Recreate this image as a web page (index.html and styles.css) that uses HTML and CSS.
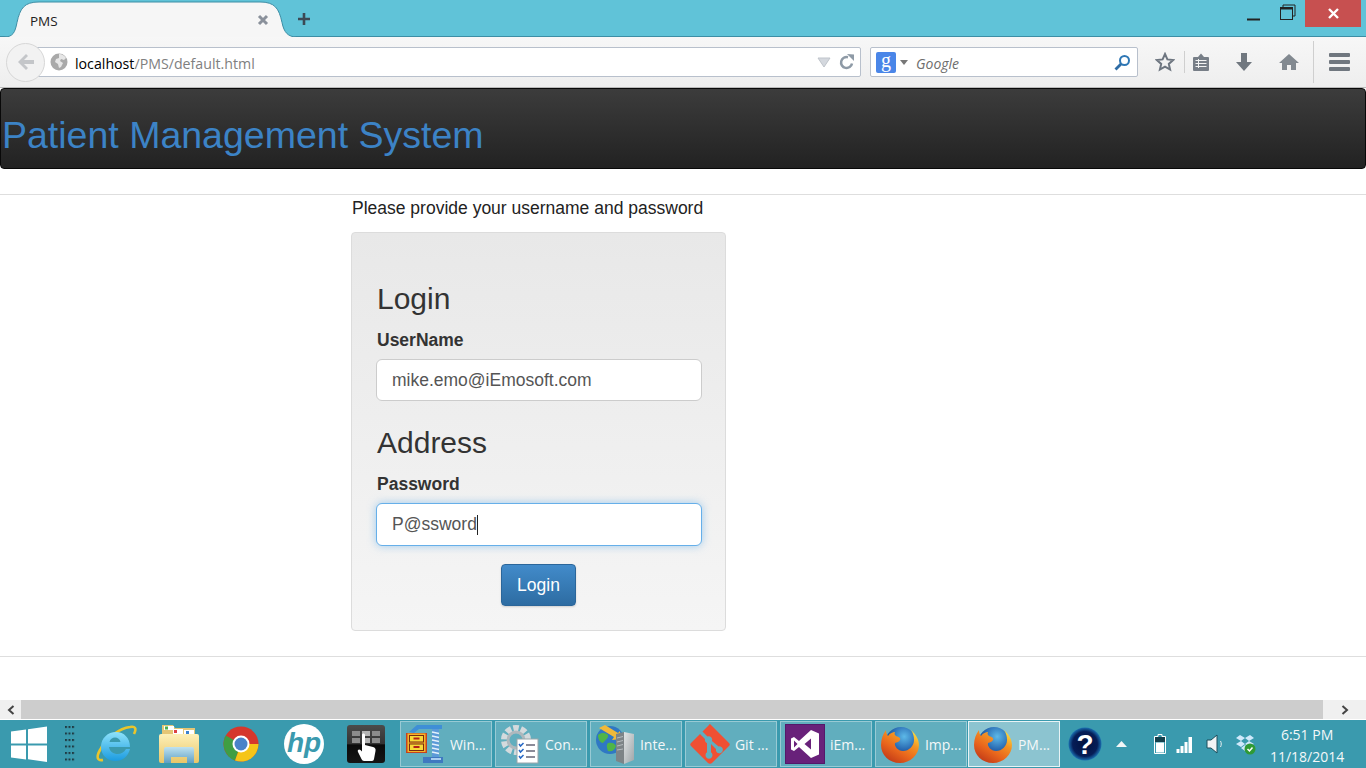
FILE: index.html
```html
<!DOCTYPE html>
<html lang="en">
<head>
<meta charset="UTF-8">
<title>PMS</title>
<link rel="stylesheet" href="styles.css">
</head>
<body>

<svg class="defs" width="0" height="0">
    <defs>
        <radialGradient id="foxGlobe" cx="0.6" cy="0.3" r="0.75">
            <stop offset="0" stop-color="#5db9e8"/>
            <stop offset="0.55" stop-color="#2767b0"/>
            <stop offset="1" stop-color="#103a7c"/>
        </radialGradient>
        <linearGradient id="foxTail" x1="0.85" y1="0.1" x2="0.25" y2="0.95">
            <stop offset="0" stop-color="#fbd23c"/>
            <stop offset="0.3" stop-color="#f39223"/>
            <stop offset="0.65" stop-color="#e9651c"/>
            <stop offset="1" stop-color="#c53d18"/>
        </linearGradient>
        <linearGradient id="ieBlue" x1="0" y1="0" x2="0" y2="1">
            <stop offset="0" stop-color="#8de2fa"/>
            <stop offset="1" stop-color="#1b9be0"/>
        </linearGradient>
        <linearGradient id="folderBody" x1="0" y1="0" x2="0" y2="1">
            <stop offset="0" stop-color="#fdf0b8"/>
            <stop offset="1" stop-color="#e9c668"/>
        </linearGradient>
        <linearGradient id="folderArch" x1="0" y1="0" x2="0" y2="1">
            <stop offset="0" stop-color="#bfe2f0"/>
            <stop offset="1" stop-color="#5f9fc4"/>
        </linearGradient>
        <linearGradient id="serverSide" x1="0" y1="0" x2="1" y2="1">
            <stop offset="0" stop-color="#e2e5e6"/>
            <stop offset="1" stop-color="#9ea5a8"/>
        </linearGradient>
        <linearGradient id="touchBg" x1="0" y1="0" x2="0" y2="1">
            <stop offset="0" stop-color="#4b4b4b"/>
            <stop offset="0.5" stop-color="#333"/>
            <stop offset="0.52" stop-color="#0a0a0a"/>
            <stop offset="1" stop-color="#151515"/>
        </linearGradient>
        <radialGradient id="helpBg" cx="0.5" cy="0.5" r="0.5">
            <stop offset="0" stop-color="#02123f"/>
            <stop offset="0.75" stop-color="#061d57"/>
            <stop offset="1" stop-color="#1a6fb0"/>
        </radialGradient>
        <pattern id="gripDots" width="3.500" height="6.500" patternUnits="userSpaceOnUse">
            <rect width="2" height="2" fill="#1f3a42"/>
        </pattern>

        <symbol id="firefox" viewBox="0 0 40 40">
            <circle cx="21" cy="19" r="16" fill="url(#foxGlobe)"/>
            <path d="M31 6C37 11 39 17 39 21C39 31 30 39 20 39C9 39 1 31 1 21C1 15 3 10 6 6C6 9 7 11 8 12C10 9 13 8 15 8C14 10 15 11 16 12C19 13 21 14 20 16C19 18 17 18 15 19C14 22 18 27 23 27C29 27 34 22 34 16C34 12 33 9 31 6Z" fill="url(#foxTail)"/>
        </symbol>
    </defs>
</svg>

<div class="titlebar">
    <svg class="tab-shape" width="300" height="37" viewBox="0 0 300 37">
        <path d="M4 37c9 0 11-4.500 13-14.500 3-14 7-20.500 22-20.500h221c15 0 19 6.500 22 20.500 2 10 6 14.500 15 14.500" fill="#f6f6f6" stroke="#3d8ea5"/>
    </svg>
    <span class="tab-title">PMS</span>
    <svg class="tab-close" width="12" height="12" viewBox="0 0 12 12"><path d="M2 2l8 8M10 2l-8 8" stroke="#8a919b" stroke-width="3"/></svg>
    <svg class="tab-new" width="14" height="14" viewBox="0 0 14 14"><path d="M7 1v12M1 7h12" stroke="#3c4a55" stroke-width="2.600"/></svg>
    <div class="window-btns">
        <svg width="14" height="14" viewBox="0 0 14 14"><path d="M0 12.500h13" stroke="#222" stroke-width="2"/></svg>
        <svg class="btn-restore" width="16" height="16" viewBox="0 0 16 16"><path d="M3 3V1h12v11h-2" fill="none" stroke="#222"/><rect x=".5" y="3.500" width="12" height="12" fill="none" stroke="#222"/><path d="M1 4.500h11" stroke="#222" stroke-width="2"/></svg>
        <div class="btn-close"><svg width="11" height="11" viewBox="0 0 11 11"><path d="M1 1l9 9M10 1l-9 9" stroke="#fff" stroke-width="2.400"/></svg></div>
    </div>
</div>

<div class="toolbar">
    <div class="back">
        <svg width="20" height="20" viewBox="0 0 20 20"><path d="M10 2L2 10l8 8 2-2-4-4h10V8H8l4-4z" fill="#c4c6c9"/></svg>
    </div>
    <div class="urlbar">
        <svg class="globe" width="18" height="18" viewBox="0 0 18 18">
            <circle cx="9" cy="9" r="8.500" fill="#a9a9a9"/>
            <path d="M9 1c3 0 6 2 7 4l-2 2-3-1-1 2 3 2-2 4-2 1-1-4-3-2 1-3 3-1z" fill="#e6e6e6"/>
        </svg>
        <span class="url"><span class="url-host">localhost</span>/PMS/default.html</span>
        <svg class="url-drop" width="14" height="11" viewBox="0 0 14 11"><path d="M1 1h12L7 10z" fill="#d4d8de" stroke="#bfc4cb"/></svg>
        <svg class="url-reload" width="16" height="16" viewBox="0 0 16 16"><path d="M13 9.500A5.500 5.500 0 1 1 9 3.200" fill="none" stroke="#8e9aa6" stroke-width="2.500"/><path d="M8 0l7 .5V7z" fill="#8e9aa6"/></svg>
    </div>
    <div class="searchbar">
        <span class="engine">g</span>
        <svg class="engine-drop" width="8" height="5" viewBox="0 0 8 5"><path d="M0 0h8L4 5z" fill="#777"/></svg>
        <span class="search-text">Google</span>
        <svg class="search-go" width="17" height="17" viewBox="0 0 17 17"><circle cx="10.500" cy="6.500" r="4.500" fill="none" stroke="#2e77b5" stroke-width="2"/><path d="M7 10l-5.500 5.500" stroke="#2e6ca5" stroke-width="2.800"/></svg>
    </div>
    <div class="tools">
        <svg class="tool-star" width="20" height="20" viewBox="0 0 20 20"><path d="M10 2l2.400 5.400 5.800.6-4.400 3.900 1.300 5.700L10 14.700l-5.100 2.900 1.300-5.700L1.800 8l5.800-.6z" fill="none" stroke="#6e7680" stroke-width="2"/></svg>
        <span class="tool-sep"></span>
        <svg class="tool-list" width="18" height="20" viewBox="0 0 18 20"><path d="M2 5h4l3-3.500L12 5h4a1 1 0 0 1 1 1v12a1 1 0 0 1-1 1H2a1 1 0 0 1-1-1V6a1 1 0 0 1 1-1z" fill="#777e87"/><path d="M3.500 8.500h11M3.500 11.500h11M3.500 14.500h11M6.500 7v9" stroke="#f3f3f3"/></svg>
        <svg class="tool-down" width="18" height="20" viewBox="0 0 18 20"><path d="M6 1h6v9h5l-8 9-8-9h5z" fill="#70777f"/></svg>
        <svg class="tool-home" width="20" height="20" viewBox="0 0 20 20"><path d="M10 2L0 11h3v7h5v-5h4v5h5v-7h3z" fill="#828990"/></svg>
        <span class="tool-sep tall"></span>
        <div class="hamburger"><i></i><i></i><i></i></div>
    </div>
</div>

<div class="page">
    <div class="site-nav">
        <a class="brand">Patient Management System</a>
    </div>
    <hr class="rule first">
    <div class="content">
        <p class="intro">Please provide your username and password</p>
        <div class="well">
            <h3>Login</h3>
            <label>UserName</label>
            <div class="field">mike.emo@iEmosoft.com</div>
            <h3 class="second">Address</h3>
            <label>Password</label>
            <div class="field focused">P@ssword<span class="caret"></span></div>
            <div class="actions"><button class="btn-login">Login</button></div>
        </div>
    </div>
    <hr class="rule last">
</div>

<div class="hscroll">
    <div class="hscroll-btn"><svg width="8" height="10" viewBox="0 0 8 10"><path d="M6.500 1L2 5l4.500 4" fill="none" stroke="#444" stroke-width="2"/></svg></div>
    <div class="hscroll-track"></div>
    <div class="hscroll-btn right"><svg width="8" height="10" viewBox="0 0 8 10"><path d="M1.500 1L6 5 1.500 9" fill="none" stroke="#444" stroke-width="2"/></svg></div>
</div>

<div class="taskbar">
    <div class="start">
        <svg width="36" height="36" viewBox="0 0 36 36"><path d="M0 5.500l15-2v14H0zM17 3.200L36 .5v17H17zM0 19.500h15v14l-15-2zM17 19.500h19v16.500l-19-2.700z" fill="#fff"/></svg>
    </div>
    <div class="grip">
        <svg width="10" height="36" viewBox="0 0 10 36"><rect width="10" height="36" fill="url(#gripDots)"/></svg>
    </div>

    <!-- pinned -->
    <div class="pin">
        <svg width="44" height="40" viewBox="0 0 44 40">
            <path d="M8 36C2 37 1 33 5 26C11 14 25 4 35 3C40 2 42 4 39 10" fill="none" stroke="#e9c52c" stroke-width="2.600"/>
            <path d="M21 8c8 0 14 6 14 15H14c1 8 13 10 17 2h4c-2 8-8 12-14 12c-9 0-15-6-15-14c0-9 7-15 15-15zM14.500 18h11c-1-6-10-6-11 0z" fill="url(#ieBlue)" fill-rule="evenodd"/>
        </svg>
    </div>
    <div class="pin">
        <svg width="40" height="40" viewBox="0 0 40 40">
            <path d="M3 1h11l2 3h20v8H3z" fill="#e5c675"/>
            <rect x="5" y="2" width="10" height="4" fill="#fff"/>
            <rect x="6" y="2.500" width="3" height="3" fill="#4caf50"/>
            <rect x="14" y="5" width="10" height="5" fill="#fff"/>
            <rect x="15" y="6" width="3" height="3" fill="#d44"/>
            <rect x="25" y="6" width="10" height="5" fill="#fff"/>
            <rect x="27" y="7" width="3" height="3" fill="#3b82d0"/>
            <rect x="0" y="10" width="40" height="29" rx="2" fill="url(#folderBody)"/>
            <path d="M5 39V25q0-2 2-2h26q2 0 2 2v14h-7v-6H12v6z" fill="url(#folderArch)"/>
        </svg>
    </div>
    <div class="pin">
        <svg width="36" height="36" viewBox="0 0 36 36">
            <circle cx="18" cy="18" r="17.500" fill="#d5372c"/>
            <path d="M18 18L2.800 9.500A17.500 17.500 0 0 0 12 34.500z" fill="#3f9e43"/>
            <path d="M18 18h17.500A17.500 17.500 0 0 1 12 34.500L18 18z" fill="#f5c518"/>
            <circle cx="18" cy="18" r="8.500" fill="#fff"/>
            <circle cx="18" cy="18" r="6.500" fill="#4a83c9"/>
        </svg>
    </div>
    <div class="pin">
        <svg width="40" height="40" viewBox="0 0 40 40">
            <circle cx="20" cy="20" r="20" fill="#fff"/>
            <text x="20" y="28" text-anchor="middle" class="hp-mark">hp</text>
        </svg>
    </div>
    <div class="pin">
        <svg width="38" height="38" viewBox="0 0 38 38">
            <rect width="38" height="38" rx="3" fill="url(#touchBg)"/>
            <g fill="#8b8b8b">
                <rect x="5" y="6" width="8" height="5"/><rect x="15" y="6" width="8" height="5" fill="#b4b4b4"/><rect x="25" y="6" width="8" height="5"/>
                <rect x="5" y="13" width="8" height="5"/><rect x="15" y="13" width="8" height="5" fill="#b4b4b4"/><rect x="25" y="13" width="8" height="5"/>
            </g>
            <path d="M15 10c0-2 3-2 3 0v10l8 2c2 .5 3 2 2.500 4l-1.500 8c-.2 1-1 2-2 2H17c-1 0-2-1-2.500-2L11 27c-1-2 1-3.500 2.500-2l1.500 1.500z" fill="#fff"/>
        </svg>
    </div>

    <!-- running programs -->
    <div class="tasks">
        <div class="task">
            <svg width="40" height="40" viewBox="0 0 40 40">
                <path d="M4 8L12 1H37V5H14L9 9z" fill="#3f8fd6"/>
                <rect x="1" y="9" width="21" height="20" fill="#c6431e"/>
                <rect x="2.500" y="9.500" width="18" height="18.500" fill="#f3b52a"/>
                <rect x="4.500" y="11.500" width="14" height="6.500" fill="#f7d936" stroke="#7a2a10"/>
                <rect x="4.500" y="20" width="14" height="6.500" fill="#f7d936" stroke="#7a2a10"/>
                <path d="M8.500 14.500h6M8.500 23h6" stroke="#b3201a" stroke-width="2"/>
                <path d="M27 5h7v29h-7z" fill="#5c9ad8"/>
                <path d="M27 8l7 1.500M27 12l7 1.500M27 16l7 1.500M27 20l7 1.500M27 24l7 1.500M27 28l7 1.500" stroke="#e3f0fb" stroke-width="1.600"/>
                <path d="M18 33h20v6H18z" fill="#3f79c0"/>
                <path d="M26 34h10v2H26z" fill="#a9cdf0"/>
            </svg>
            <span>Win...</span>
        </div>
        <div class="task">
            <svg width="40" height="40" viewBox="0 0 40 40">
                <circle cx="16" cy="16" r="11" fill="none" stroke="#d4dadd" stroke-width="8" stroke-dasharray="5 2"/>
                <circle cx="16" cy="16" r="8" fill="none" stroke="#aeb8bd" stroke-width="3"/>
                <rect x="17" y="15" width="21" height="24" fill="#fff" stroke="#9aa5aa"/>
                <path d="M19 20l1.500 2 3-3M19 26l1.500 2 3-3M19 32l1.500 2 3-3" fill="none" stroke="#2668c5" stroke-width="1.500"/>
                <path d="M26 21h9M26 27h9M26 33h9" stroke="#667" stroke-width="1.500"/>
            </svg>
            <span>Con...</span>
        </div>
        <div class="task">
            <svg width="40" height="42" viewBox="0 0 40 42">
                <circle cx="15" cy="17" r="14" fill="#2f78c4"/>
                <path d="M3 12c4-3 8-2 10 0 1 3-3 5-5 8-3 0-5-4-5-8zM13 20c3-1 7 0 8 3-1 4-4 6-8 5-1-3-2-6 0-8z" fill="#4fb548"/>
                <path d="M4 5l6-3 13 8 2-2 1 8-9 1 2-3z" fill="#f0b93a"/>
                <path d="M29 9l10 2v26l-10 4z" fill="url(#serverSide)"/>
                <path d="M21 11l8-2v32l-8-3z" fill="#7d8487"/>
                <path d="M22 15l6-1.500M22 19l6-1.500M22 23l6-1.500M22 27l6-1" stroke="#b6bcbf"/>
            </svg>
            <span>Inte...</span>
        </div>
        <div class="task">
            <svg width="40" height="40" viewBox="0 0 40 40">
                <path d="M20 0l19 19c1 1 1 2 0 3L22 39c-1 1-3 1-4 0L1 22c-1-1-1-2 0-3L10 10l5 5v0c-.5 2 .5 3.500 2 4.300v9a3.500 3.500 0 1 0 4 0V20l5 5a3.500 3.500 0 1 0 2.500-2.500L22 17a3.500 3.500 0 0 0-4.500-4.500L12.500 7.500 19 1c.3-.7.7-1 1-1z" fill="#f05033"/>
            </svg>
            <span>Git ...</span>
        </div>
        <div class="task">
            <div class="vs-icon">
                <svg width="30" height="30" viewBox="0 0 30 30"><path d="M21 1l8 3.500v21L21 29 9 18l-5 4-3-1.500v-11L4 8l5 4zM21 9.500L14.500 15l6.500 5.500zM4 11.500v7l3.500-3.500z" fill="#fff" fill-rule="evenodd"/></svg>
            </div>
            <span>iEm...</span>
        </div>
        <div class="task">
            <svg class="fox" width="40" height="40"><use href="#firefox"/></svg>
            <span>Imp...</span>
        </div>
        <div class="task active">
            <svg class="fox" width="40" height="40"><use href="#firefox"/></svg>
            <span>PM...</span>
        </div>
    </div>

    <!-- tray -->
    <div class="tray">
        <svg class="tray-help" width="34" height="34" viewBox="0 0 34 34">
            <circle cx="17" cy="17" r="16.500" fill="url(#helpBg)"/>
            <text x="17" y="27" text-anchor="middle" class="help-mark">?</text>
        </svg>
        <svg class="tray-up" width="11" height="6" viewBox="0 0 11 6"><path d="M5.500 0L11 6H0z" fill="#f2f6f7"/></svg>
        <svg class="tray-batt" width="12" height="20" viewBox="0 0 12 20"><path d="M4 .5h4v2h3.500v17H.5v-17H4z" fill="#3a9aae" stroke="#fff"/><rect x="1" y="3" width="10" height="5" fill="#14404c"/><rect x="2" y="8.500" width="8" height="10" fill="#fff"/></svg>
        <svg class="tray-signal" width="17" height="17" viewBox="0 0 17 17"><path d="M.5 13h3v4h-3zM4.500 10h3v7h-3zM8.500 6h3v11h-3zM12.500 1h3.500v16h-3.500z" fill="#fff"/></svg>
        <svg class="tray-sound" width="18" height="20" viewBox="0 0 18 20"><path d="M1 6h4l6-5v18l-6-5H1z" fill="#f1f4f5" stroke="#1c4f5c"/><path d="M14.500 7c1 2 1 4 0 6" fill="none" stroke="#e8eef0"/></svg>
        <svg class="tray-box" width="21" height="21" viewBox="0 0 21 21">
            <path d="M5 1l5 3-4 3-5-3zM15 1l-5 3 4 3 5-3zM6 7l4 3-4 3-5-3zM14 7l-4 3 4 3 5-3zM6 14l4-3 4 3-4 3z" fill="#cfe9fb"/>
            <circle cx="15" cy="15" r="5.500" fill="#2f9a34"/>
            <path d="M12.500 15l2 2 3-3.500" fill="none" stroke="#fff" stroke-width="1.500"/>
        </svg>
        <div class="clock">
            <span>6:51 PM</span>
            <span>11/18/2014</span>
        </div>
    </div>
</div>

</body>
</html>
```

FILE: styles.css
```css
* {
    box-sizing: border-box;
}

html,
body {
    margin: 0;
    padding: 0;
    height: 100%;
    overflow: hidden;
}

body {
    width: 1366px;
    height: 768px;
    display: flex;
    flex-direction: column;
    font-family: "Liberation Sans", Arial, sans-serif;
    background-color: #fff;
}

.defs {
    position: absolute;
}

/* browser window */
.titlebar {
    position: relative;
    flex: 0 0 37px;
    background-color: #60c3d8;
    border-bottom: 1px solid #3d8ea5;
}

.tab-shape {
    position: absolute;
    left: 0;
    top: 0;
}

.tab-title {
    position: absolute;
    left: 30px;
    top: 12px;
    font-family: "Open Sans", sans-serif;
    font-size: 13.500px;
    line-height: 18px;
    color: #222;
}

.tab-close {
    position: absolute;
    left: 257px;
    top: 14px;
}

.tab-new {
    position: absolute;
    left: 297px;
    top: 12px;
}

.window-btns {
    position: absolute;
    right: 5px;
    top: 0;
    display: flex;
    align-items: flex-start;
}

.window-btns svg {
    margin-top: 7px;
}

.window-btns .btn-restore {
    margin: 4px 9px 0 19px;
}

.btn-close {
    width: 56px;
    height: 27px;
    background-color: #c75050;
    display: flex;
    align-items: center;
    justify-content: center;
}

.btn-close svg {
    margin-top: 0;
}

.toolbar {
    flex: 0 0 51px;
    display: flex;
    align-items: center;
    padding-left: 6px;
    background: linear-gradient(#f7f7f7, #eeeeee);
    border-bottom: 1px solid #b9b9b9;
}

.back {
    position: relative;
    z-index: 2;
    flex: 0 0 39px;
    height: 39px;
    display: flex;
    align-items: center;
    justify-content: center;
    background-color: #f2f2f2;
    border: 1px solid #d7d7d7;
    border-radius: 50%;
}

.urlbar {
    width: 825px;
    height: 30px;
    margin-left: -9px;
    padding-left: 13px;
    display: flex;
    align-items: center;
    background-color: #fff;
    border: 1px solid #b8c0cc;
    border-radius: 2px;
}

.url {
    margin-top: 2px;
    margin-left: 7px;
    font-family: "Open Sans", sans-serif;
    font-size: 14.200px;
    color: #808080;
}

.url-host {
    color: #000;
}

.url-drop {
    margin-left: auto;
}

.url-reload {
    margin: 0 5px 0 8px;
}

.searchbar {
    width: 268px;
    height: 30px;
    margin-left: 9px;
    padding-left: 5px;
    display: flex;
    align-items: center;
    background-color: #fff;
    border: 1px solid #b8c0cc;
    border-radius: 2px;
}

.engine {
    width: 20px;
    height: 21px;
    text-align: center;
    font-family: "Liberation Serif", serif;
    font-size: 20px;
    line-height: 17px;
    color: #fff;
    background-color: #4a86e8;
    border-radius: 2px;
}

.engine-drop {
    margin-left: 4px;
}

.search-text {
    margin-top: 2px;
    margin-left: 8px;
    font-family: "Open Sans", sans-serif;
    font-style: italic;
    font-size: 14px;
    color: #6d6d6d;
}

.search-go {
    margin-left: auto;
    margin-right: 6px;
}

.tools {
    flex: 1;
    height: 100%;
    display: flex;
    align-items: center;
}

.tool-star {
    margin-left: 17px;
}

.tool-sep {
    width: 1px;
    height: 22px;
    margin-left: 9px;
    background-color: #cfcfcf;
}

.tool-sep.tall {
    height: 42px;
    margin-left: 14px;
}

.tool-list {
    margin-left: 7px;
}

.tool-down {
    margin-left: 25px;
}

.tool-home {
    margin-left: 26px;
}

.hamburger {
    width: 21px;
    margin-left: 15px;
}

.hamburger i {
    display: block;
    height: 4px;
    margin-bottom: 3px;
    background-color: #70777f;
    border-radius: 1px;
}

.hamburger i:last-child {
    margin-bottom: 0;
}

/* the page itself */
.page {
    flex: 0 0 612px;
    overflow: hidden;
    color: #333;
}

.site-nav {
    height: 81px;
    padding-top: 21px;
    background: linear-gradient(#3c3c3c, #222);
    border: 1px solid #080808;
    border-radius: 4px;
}

.brand {
    display: block;
    padding-left: 1px;
    font-size: 37.500px;
    line-height: 51px;
    color: #3c83c6;
}

.rule {
    height: 1px;
    margin: 0;
    border: 0;
    background-color: #dedede;
}

.rule.first {
    margin-top: 25px;
}

.rule.last {
    margin-top: 25px;
}

.content {
    width: 375px;
    margin-left: 351px;
}

.intro {
    margin: 0 0 11px 1px;
    font-size: 17.500px;
    line-height: 26px;
    color: #222;
}

.well {
    height: 399px;
    padding: 49px 23px 0 24px;
    background: linear-gradient(#e8e8e8, #f5f5f5);
    border: 1px solid #dcdcdc;
    border-radius: 4px;
}

h3 {
    margin: 0 0 13px 1px;
    font-size: 30px;
    font-weight: 400;
    line-height: 33px;
    color: #333;
}

h3.second {
    margin-top: 25px;
}

label {
    display: block;
    margin-bottom: 6px;
    margin-left: 1px;
    font-size: 17.500px;
    font-weight: 700;
    line-height: 25px;
}

.field {
    height: 42px;
    padding: 0 15px;
    font-size: 17.500px;
    line-height: 40px;
    color: #555;
    background-color: #fff;
    border: 1px solid #ccc;
    border-radius: 6px;
}

.field.focused {
    height: 43px;
    border-color: #66afe9;
    box-shadow: 0 0 8px rgba(102, 175, 233, 0.6);
}

.caret {
    display: inline-block;
    width: 1px;
    height: 20px;
    vertical-align: -5px;
    background-color: #222;
}

.actions {
    margin-top: 18px;
    padding-right: 1px;
    text-align: center;
}

.btn-login {
    width: 75px;
    height: 42px;
    padding: 0;
    font-family: inherit;
    font-size: 17.500px;
    color: #fff;
    background: linear-gradient(#428bca, #2d6ca2);
    border: 1px solid #2b669a;
    border-radius: 4px;
    box-shadow: 0 1px 2px rgba(0, 0, 0, 0.15);
}

/* horizontal scrollbar */
.hscroll {
    flex: 0 0 20px;
    display: flex;
    border-bottom: 1px solid #fff;
}

.hscroll-btn {
    flex: 0 0 21px;
    display: flex;
    align-items: center;
    justify-content: center;
    background-color: #f0f0f0;
}

.hscroll-btn.right {
    flex-basis: 43px;
}

.hscroll-track {
    flex: 1;
    background-color: #cdcdcd;
}

/* windows taskbar */
.taskbar {
    flex: 0 0 48px;
    display: flex;
    align-items: center;
    background-color: #3a9aae;
    font-family: "Open Sans", sans-serif;
    color: #f4f8f9;
}

.start {
    flex: 0 0 55px;
    padding-left: 11px;
    display: flex;
    align-items: center;
}

.grip {
    flex: 0 0 31px;
    padding-left: 10px;
    display: flex;
    align-items: center;
}

.pin {
    flex: 0 0 62.200px;
    display: flex;
    align-items: center;
    justify-content: center;
}

.tasks {
    display: flex;
    gap: 3px;
    margin-left: 3px;
    height: 100%;
    padding: 1px 0;
}

.task {
    width: 92px;
    padding-left: 4px;
    display: flex;
    align-items: center;
    gap: 5px;
    font-size: 14px;
    white-space: nowrap;
    background-color: rgba(255, 255, 255, 0.2);
    border: 1px solid rgba(255, 255, 255, 0.35);
}

.task.active {
    margin-left: -2px;
    background-color: rgba(255, 255, 255, 0.42);
    border-color: #e8f3f5;
}

.vs-icon {
    flex: 0 0 40px;
    height: 40px;
    display: flex;
    align-items: center;
    justify-content: center;
    background-color: #68217a;
    border: 1px solid #54186a;
}

.hp-mark {
    font-family: "Liberation Sans", sans-serif;
    font-size: 28px;
    font-weight: 700;
    font-style: italic;
    fill: #3a9aae;
}

.help-mark {
    font-family: "Liberation Sans", sans-serif;
    font-size: 28px;
    font-weight: 700;
    fill: #fff;
}

.tray {
    position: relative;
    flex: 1;
    height: 100%;
    display: flex;
    align-items: center;
}

.tray-help {
    margin-left: 8px;
}

.tray-up {
    margin-left: 14px;
}

.tray-batt {
    margin-left: 27px;
}

.tray-signal {
    margin-left: 10px;
}

.tray-sound {
    margin-left: 13px;
}

.tray-box {
    margin-left: 11px;
}

.clock {
    margin-top: 3px;
    margin-left: 14px;
    display: flex;
    flex-direction: column;
    align-items: center;
    font-size: 14px;
    line-height: 22px;
    white-space: nowrap;
}
```
